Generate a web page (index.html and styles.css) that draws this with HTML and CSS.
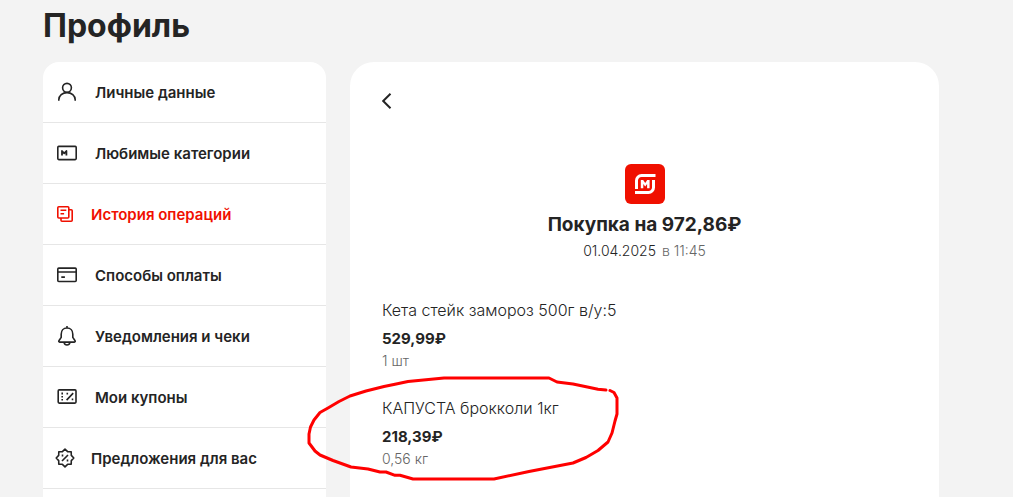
FILE: index.html
```
<!DOCTYPE html>
<html lang="ru">
<head>
	<meta charset="UTF-8">
	<title>Профиль</title>
	<link rel="stylesheet" href="styles.css">
</head>
<body>

<div class="page">
	<h1 class="page-title">Профиль</h1>

	<div class="columns">
		<nav class="menu">
			<a class="menu-item" href="#">
				<svg class="icon" viewBox="0 0 24 24"><circle cx="12" cy="7.8" r="4.4"/><path d="M3.8 20.8v-1a8.2 7.2 0 0 1 16.4 0v1"/></svg>
				<span>Личные данные</span>
			</a>
			<a class="menu-item" href="#">
				<svg class="icon" viewBox="0 0 24 24"><rect x="2.8" y="5.4" width="18.4" height="13.2" rx="1"/><path class="thick" d="M7 14.4V10l2.200 2.400L11.400 10v4.400"/></svg>
				<span>Любимые категории</span>
			</a>
			<a class="menu-item small active" href="#">
				<svg class="icon" viewBox="0 0 20 20"><rect x="2.8" y="2.8" width="11" height="11.2" rx="1"/><path d="M5.5 6.3h5.8M5.5 9.7h3.6M14 5.8h2.2a1 1 0 0 1 1 1v9.4a1 1 0 0 1-1 1H7a1 1 0 0 1-1-1V14"/></svg>
				<span>История операций</span>
			</a>
			<a class="menu-item" href="#">
				<svg class="icon" viewBox="0 0 24 24"><rect x="2.8" y="5.1" width="18.4" height="13.4" rx="1"/><path d="M3 9h18M6.3 14.100h3.6"/></svg>
				<span>Способы оплаты</span>
			</a>
			<a class="menu-item" href="#">
				<svg class="icon" viewBox="0 0 24 24"><path d="M12 2v2M12 4c-3.6 0-5.8 2.8-5.8 6.2v3.2L3.9 16.8c-.4.7 0 1.3.7 1.3h14.8c.7 0 1.1-.6.7-1.3l-2.3-3.4v-3.2C17.8 6.8 15.6 4 12 4zM9 18.4c.4 1.8 1.6 2.6 3 2.6s2.6-.8 3-2.6"/></svg>
				<span>Уведомления и чеки</span>
			</a>
			<a class="menu-item" href="#">
				<svg class="icon" viewBox="0 0 24 24"><rect x="3.2" y="4.9" width="17.8" height="13.2" rx="1"/><path d="M11.6 15.1l6.6-7M7.2 7.5v2M7.2 11v1.5M7.2 14v1.5M12.3 7.7v1.8M17.5 13.5v1.8"/></svg>
				<span>Мои купоны</span>
			</a>
			<a class="menu-item small" href="#">
				<svg class="icon" viewBox="0 0 20 20"><path d="M10 1.2l2.6 2.5 3.6.1.1 3.6L18.8 10l-2.5 2.6-.1 3.6-3.6.1L10 18.8l-2.6-2.5-3.6-.1-.1-3.6L1.2 10l2.5-2.6.1-3.6 3.6-.1z"/><path d="M7 13l6-6M7.5 6.6v1.8M12.5 11.6v1.8"/></svg>
				<span>Предложения для вас</span>
			</a>
		</nav>

		<main class="receipt">
			<button class="back" type="button" aria-label="Назад">
				<svg viewBox="0 0 10 16"><path d="M8.5.8L1.2 8l7.3 7.2"/></svg>
			</button>

			<header class="summary">
				<svg class="logo" viewBox="0 0 40 40">
					<rect width="40" height="40" rx="6"/>
					<path d="M30.5 11.5h-14a5 5 0 0 0-5 5V25M10 28.5h13.500a5 5 0 0 0 5-5V16"/>
					<path class="letter" d="M15.8 24.3V16h2.4l2 2.9 2-2.9h2.4v8.300h-2.500v-4.400l-1.900 2.500-1.900-2.500v4.400z"/>
				</svg>
				<h2 class="summary-title">Покупка на 972,86&#8381;</h2>
				<p class="summary-date">01.04.2025 <span>в 11:45</span></p>
			</header>

			<ul class="goods">
				<li class="goods-item">
					<div class="goods-name">Кета стейк замороз 500г в/у:5</div>
					<div class="goods-price">529,99&#8381;</div>
					<div class="goods-count">1 шт</div>
				</li>
				<li class="goods-item">
					<div class="goods-name">КАПУСТА брокколи 1кг</div>
					<div class="goods-price">218,39&#8381;</div>
					<div class="goods-count">0,56 кг</div>
					<!-- hand-drawn outline around the item -->
					<svg class="outline" viewBox="0 0 330 132"><path d="M306 25L298 24.300 285 21.500 273 19 257 17 249 13H144L108 16.500 95 19.300 84 21.500 66 26 50 31 39 36.500 28 43 20 47.500 14 55 10.500 62 9 69V78L15 86 20 90 33 95.500 51 102 68 104 80 107H86L95 110.300H100L113 114H194L229 106.500 273 98 286 92.500 298 85.500 308 77 312 68 315 56 317 49V33L314 27.500 310 25.500"/></svg>
				</li>
			</ul>
		</main>
	</div>
</div>

</body>
</html>
```
FILE: styles.css
```
* {
	box-sizing: border-box;
}

body {
	margin: 0;
	background: #f3f3f3;
	color: #242424;
	font-family: Inter, "Noto Sans", sans-serif;
}

h1, h2, p, ul {
	margin: 0;
	padding: 0;
}

.page {
	display: flex;
	flex-direction: column;
	height: 100vh;
	padding: 6px 74px 0 43px;
	overflow: hidden;
}

.page-title {
	margin-bottom: 16px;
	font-size: 32px;
	line-height: 40px;
	font-weight: 700;
}

.columns {
	display: flex;
	flex: 1;
	gap: 24px;
}

.menu {
	flex: 0 0 283px;
	background: #fff;
	border-radius: 16px 16px 0 0;
}

.menu-item {
	display: flex;
	align-items: center;
	gap: 16px;
	height: 61px;
	padding: 0 12px;
	border-bottom: 1px solid #e6e6e6;
	color: #242424;
	font-size: 15px;
	line-height: 20px;
	font-weight: 600;
	text-decoration: none;
}

.menu-item.active {
	color: #f01000;
}

.menu-item span {
	padding-top: 2px;
}

.icon {
	width: 24px;
	height: 24px;
	fill: none;
	stroke: currentColor;
	stroke-width: 1.6;
	stroke-linejoin: round;
}

.icon .thick {
	stroke-width: 1.8;
}

.small .icon {
	width: 20px;
	height: 20px;
}

.receipt {
	flex: 1;
	padding: 30px 32px 0;
	background: #fff;
	border-radius: 24px 24px 0 0;
}

.back {
	display: block;
	height: 18px;
	padding: 0;
	border: 0;
	background: none;
}

.back svg {
	display: block;
	width: 10px;
	height: 16px;
	fill: none;
	stroke: #242424;
	stroke-width: 2;
}

.summary {
	display: flex;
	flex-direction: column;
	align-items: center;
	margin-top: 54px;
}

.logo {
	width: 40px;
	height: 40px;
	fill: #f01000;
}

.logo path {
	fill: none;
	stroke: #fff;
	stroke-width: 3;
}

.logo .letter {
	fill: #fff;
	stroke: none;
}

.summary-title {
	margin-top: 9px;
	font-size: 19px;
	line-height: 24px;
	font-weight: 700;
}

.summary-date {
	margin-top: 4px;
	font-size: 14px;
	line-height: 20px;
	font-weight: 300;
}

.summary-date span {
	margin-left: 2px;
	color: #666;
}

.goods {
	margin-top: 38px;
	list-style: none;
}

.goods-item {
	position: relative;
	margin-bottom: 26px;
}

.goods-name {
	font-size: 16px;
	line-height: 22px;
	font-weight: 300;
}

.goods-price {
	margin-top: 6px;
	font-size: 15px;
	line-height: 24px;
	font-weight: 700;
}

.goods-count {
	color: #666;
	font-size: 14px;
	line-height: 20px;
	font-weight: 300;
}

/* lies over the item and the edge of the menu */
.outline {
	position: absolute;
	top: -32px;
	left: -82px;
	width: 330px;
	height: 132px;
	fill: none;
	stroke: #f00;
	stroke-width: 3;
	stroke-linejoin: round;
	stroke-linecap: round;
}
```
